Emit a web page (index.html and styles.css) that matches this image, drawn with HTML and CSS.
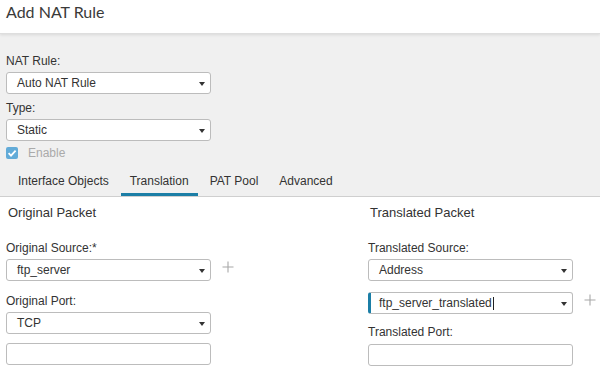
FILE: index.html
```html
<!DOCTYPE html>
<html>
<head>
<meta charset="utf-8">
<link rel="stylesheet" href="styles.css">
</head>
<body>
<header class="head"><h1 class="title">Add NAT Rule</h1></header>
<section class="top">
  <div class="field">
    <div class="label">NAT Rule:</div>
    <div class="select">Auto NAT Rule<span class="caret"></span></div>
  </div>
  <div class="field field-2">
    <div class="label">Type:</div>
    <div class="select">Static<span class="caret"></span></div>
  </div>
  <div class="check">
    <span class="box"><svg width="12" height="12" viewBox="0 0 12 12"><path d="M2.6 6.2 L5 8.6 L9.6 3.6" fill="none" stroke="#fff" stroke-width="1.8"/></svg></span>
    <span class="check-text">Enable</span>
  </div>
  <nav class="tabs">
    <span class="tab">Interface Objects</span>
    <span class="tab active">Translation</span>
    <span class="tab">PAT Pool</span>
    <span class="tab">Advanced</span>
  </nav>
</section>
<section class="panel">
  <div class="col">
    <div class="heading">Original Packet</div>
    <div class="label lbl-first">Original Source:*</div>
    <div class="row">
      <div class="select">ftp_server<span class="caret"></span></div>
      <svg class="plus" width="12" height="12" viewBox="0 0 12 12"><path d="M6 0.5 V11.5 M0.5 6 H11.5" stroke="#a8a8a8" stroke-width="1.1"/></svg>
    </div>
    <div class="label lbl-port">Original Port:</div>
    <div class="select">TCP<span class="caret"></span></div>
    <div class="input inp-left"></div>
  </div>
  <div class="col">
    <div class="heading">Translated Packet</div>
    <div class="label lbl-first">Translated Source:</div>
    <div class="select">Address<span class="caret"></span></div>
    <div class="row row-2">
      <div class="select focus"><span class="val">ftp_server_translated<span class="cursor"></span></span><span class="caret"></span></div>
      <svg class="plus" width="12" height="12" viewBox="0 0 12 12"><path d="M6 0.5 V11.5 M0.5 6 H11.5" stroke="#a8a8a8" stroke-width="1.1"/></svg>
    </div>
    <div class="label lbl-tport">Translated Port:</div>
    <div class="input inp-right"></div>
  </div>
</section>
</body>
</html>
```
FILE: styles.css
```css
* { box-sizing: border-box; }
html, body { margin: 0; padding: 0; }
body {
  width: 600px;
  height: 370px;
  overflow: hidden;
  background: #fff;
  font-family: "Liberation Sans", Arial, sans-serif;
  font-size: 12px;
  color: #333;
}
.head {
  height: 34px;
  background: #fff;
  padding: 2px 6px 0;
  border-bottom: 1px solid #dedede;
  box-shadow: 0 1px 3px rgba(0,0,0,0.10);
  position: relative;
  z-index: 1;
}
.title {
  margin: 0;
  font-family: Lato, "Open Sans", sans-serif;
  font-weight: 400;
  font-size: 16px;
  line-height: 20px;
  color: #3a3a3a;
}
.top {
  background: #f0f0f0;
  padding-top: 20px;
}
.field { margin-left: 6px; }
.field-2 { margin-top: 7px; }
.label {
  line-height: 14px;
  margin-bottom: 4px;
  color: #333;
}
.select {
  width: 205px;
  height: 22px;
  background: #fff;
  border: 1px solid #bcbcbc;
  border-radius: 3px;
  padding: 0 5px 0 10px;
  display: flex;
  align-items: center;
  justify-content: space-between;
  line-height: 14px;
  color: #333;
}
.caret {
  width: 0;
  height: 0;
  margin-top: 2px;
  border-top: 4px solid #333;
  border-left: 3px solid transparent;
  border-right: 3px solid transparent;
}
.check {
  margin: 6px 0 0 6px;
  height: 12px;
  display: flex;
  align-items: center;
  gap: 10px;
}
.box {
  width: 12px;
  height: 12px;
  border-radius: 2px;
  background: #62abd8;
  display: block;
}
.box svg { display: block; }
.check-text { color: #aaa; line-height: 12px; }
.tabs {
  margin-top: 9px;
  padding-left: 9px;
  display: flex;
  gap: 3px;
  border-bottom: 1px solid #cfcfcf;
}
.tab {
  padding: 6px 9px 5px;
  line-height: 14px;
  border-bottom: 3px solid transparent;
  color: #333;
}
.tab.active { border-bottom-color: #1b7ea6; }
.panel {
  display: grid;
  grid-template-columns: 362px 1fr;
  padding: 8px 6px 0;
}
.col { display: flex; flex-direction: column; align-items: flex-start; }
.heading {
  font-size: 13px;
  line-height: 15px;
  padding-left: 2px;
  margin-bottom: 21px;
  color: #333;
}
.lbl-first { margin-bottom: 4px; }
.row { display: flex; align-items: flex-start; }
.plus { margin: 2px 0 0 11px; display: block; }
.lbl-port { margin-top: 13px; }
.inp-left { margin-top: 9px; }
.row-2 { margin-top: 11px; }
.lbl-tport { margin-top: 11px; margin-bottom: 5px; }
.input {
  width: 205px;
  height: 22px;
  background: #fff;
  border: 1px solid #bcbcbc;
  border-radius: 3px;
}
.select.focus {
  border-left: 3px solid #1b7ea6;
  padding-left: 8px;
}
.val { display: flex; align-items: center; }
.cursor {
  display: inline-block;
  width: 1px;
  height: 13px;
  background: #222;
  margin-left: 1px;
}
```
